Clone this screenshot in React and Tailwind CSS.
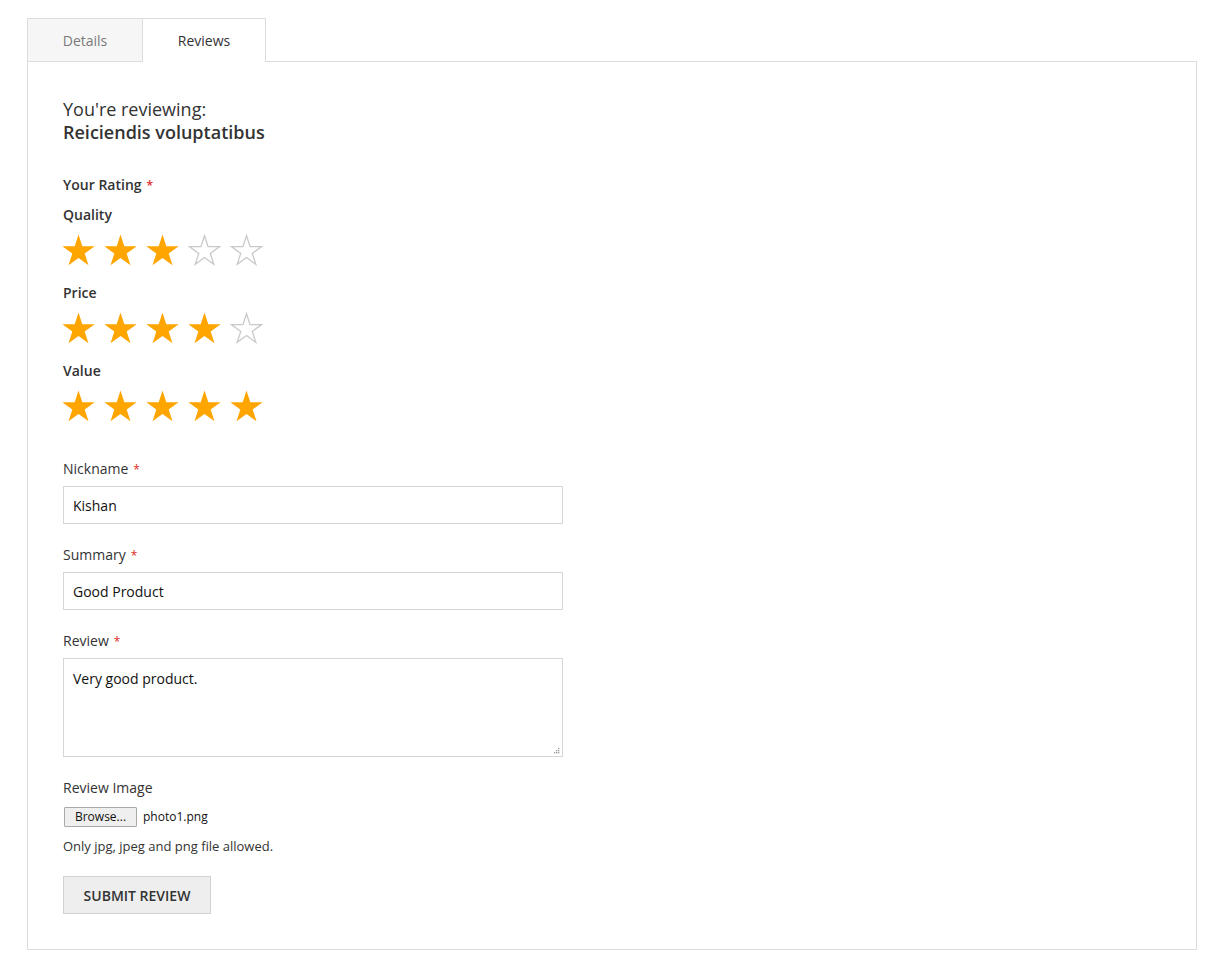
const STAR = "17,0 20.82,11.74 33.17,11.75 23.18,19.01 26.99,30.75 17,23.5 7.01,30.75 10.82,19.01 0.83,11.75 13.18,11.74";

function Star({ filled }) {
  return (
    <svg width="35" height="33" viewBox="-0.5 -0.5 35 33" className="block">
      {filled ? (
        <polygon points={STAR} fill="#ffa500" />
      ) : (
        <polygon points={STAR} fill="none" stroke="#c9c9c9" strokeWidth="1.4" strokeLinejoin="miter" transform="translate(1.2 1.2) scale(0.93)" />
      )}
    </svg>
  );
}

function Stars({ n }) {
  return (
    <div className="flex gap-[7px] h-[34px] items-start -ml-[2px]">
      {[0, 1, 2, 3, 4].map((i) => (
        <Star key={i} filled={i < n} />
      ))}
    </div>
  );
}

function Req() {
  return <span className="text-[#e02b27] text-[12px] leading-[12px] ml-[5px]">*</span>;
}

export default function App() {
  return (
    <div className="bg-white min-h-[974px] pt-[18px] pl-[27px] pr-[26px] text-[#333]" style={{ fontFamily: '"Open Sans", sans-serif' }}>
      <div className="flex h-[44px] relative z-10">
        <div className="w-[115px] h-[43px] bg-[#f6f6f6] border-l border-t border-[#dcdcdc] flex items-center justify-center text-[14px] text-[#7a7a7a]">
          Details
        </div>
        <div className="w-[124px] h-[44px] bg-white border border-b-0 border-[#dcdcdc] flex items-center justify-center text-[14px] text-[#333] pb-[1px]">
          Reviews
        </div>
      </div>
      <div className="border border-[#dcdcdc] -mt-[1px] w-[1170px] pl-[35px] pt-[36px] pb-[35px]">
        <div className="text-[18px] leading-[23px]">
          <div className="font-normal">You're reviewing:</div>
          <div className="font-semibold">Reiciendis voluptatibus</div>
        </div>
        <div className="mt-[30px] h-[20px] pt-[1px] text-[14px] leading-[20px] font-semibold">
          Your Rating<Req />
        </div>
        <div className="mt-[10px] h-[20px] pt-[1px] text-[14px] leading-[20px] font-semibold">Quality</div>
        <div className="mt-[10px]"><Stars n={3} /></div>
        <div className="mt-[14px] h-[20px] pt-[1px] text-[14px] leading-[20px] font-semibold">Price</div>
        <div className="mt-[10px]"><Stars n={4} /></div>
        <div className="mt-[14px] h-[20px] pt-[1px] text-[14px] leading-[20px] font-semibold">Value</div>
        <div className="mt-[10px]"><Stars n={5} /></div>

        <div className="mt-[34px] h-[20px] pt-[1px] text-[14px] leading-[20px]">Nickname<Req /></div>
        <div className="mt-[8px] w-[500px] h-[38px] border border-[#d6d6d6] flex items-center pl-[9px] text-[14px] text-[#111]">Kishan</div>

        <div className="mt-[20px] h-[20px] pt-[1px] text-[14px] leading-[20px]">Summary<Req /></div>
        <div className="mt-[8px] w-[500px] h-[38px] border border-[#d6d6d6] flex items-center pl-[9px] text-[14px] text-[#111]">Good Product</div>

        <div className="mt-[20px] h-[20px] pt-[1px] text-[14px] leading-[20px]">Review<Req /></div>
        <div className="mt-[8px] w-[500px] h-[99px] border border-[#d6d6d6] relative pl-[9px] pt-[10px] text-[14px] leading-[20px] text-[#111]">
          Very good product.
          <svg className="absolute right-[2px] bottom-[2px]" width="7" height="7" viewBox="0 0 7 7">
            <rect x="5" y="1" width="1.3" height="1.3" fill="#9a9a9a" />
            <rect x="3" y="3" width="1.3" height="1.3" fill="#9a9a9a" />
            <rect x="5" y="3" width="1.3" height="1.3" fill="#9a9a9a" />
            <rect x="1" y="5" width="1.3" height="1.3" fill="#9a9a9a" />
            <rect x="3" y="5" width="1.3" height="1.3" fill="#9a9a9a" />
            <rect x="5" y="5" width="1.3" height="1.3" fill="#9a9a9a" />
          </svg>
        </div>

        <div className="mt-[20px] h-[20px] pt-[1px] text-[14px] leading-[20px]">Review Image</div>
        <div className="mt-[10px] flex items-center text-[12px] text-[#111]">
          <div className="ml-[1px] w-[73px] h-[20px] bg-[#efefef] border border-[#a9a9a9] rounded-[1px] flex items-center justify-center text-[12px]">Browse...</div>
          <span className="ml-[6px]">photo1.png</span>
        </div>
        <div className="mt-[10px] text-[13px] leading-[18px]">Only jpg, jpeg and png file allowed.</div>
        <div className="mt-[21px] w-[148px] h-[38px] bg-[#eeeeee] border border-[#d2d2d2] flex items-center justify-center text-[14px] font-semibold text-[#333]">
          SUBMIT REVIEW
        </div>
      </div>
    </div>
  );
}
